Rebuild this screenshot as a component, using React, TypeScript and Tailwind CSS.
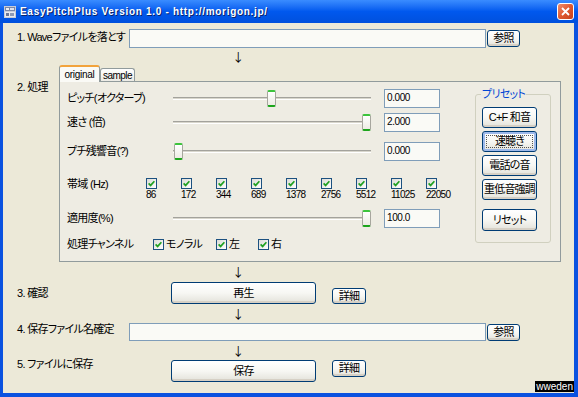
import React from 'react';

const BANDS = ['86', '172', '344', '689', '1378', '2756', '5512', '11025', '22050'];

const SLIDERS = [
  { label: 'ピッチ(オクターブ)', thumb: 94, value: '0.000', mt: 'mt-[7px]' },
  { label: '速さ (倍)', thumb: 189, value: '2.000', mt: 'mt-[5px]' },
  { label: 'プチ残響音(?)', thumb: 1, value: '0.000', mt: 'mt-[10px]' },
];

const PRESETS = ['C+F 和音', '速聴き', '電話の音', '重低音強調'];

function XpButton({ children, className = '', focused = false }: { children: React.ReactNode; className?: string; focused?: boolean }) {
  return (
    <button
      className={
        'relative flex items-center justify-center whitespace-nowrap rounded-[3px] border border-[#003C74] bg-gradient-to-b from-white via-[#F7F7F3] to-[#E3E2DA] text-[11px] leading-none tracking-[-0.8px] text-black ' +
        (focused ? 'shadow-[inset_0_0_0_2px_#9DB9EB] ' : 'shadow-[inset_0_-2px_0_#D6D0C5] ') +
        className
      }
    >
      {focused && <span className="absolute inset-[3px] border border-dotted border-[#555]" />}
      <span className="relative">{children}</span>
    </button>
  );
}

function TextBox({ value = '', className = '' }: { value?: string; className?: string }) {
  return (
    <div className={'border border-[#7F9DB9] bg-[#FAFAF6] pl-[2px] text-[10px] leading-[15px] tracking-[-0.4px] ' + className}>
      {value}
    </div>
  );
}

function Check() {
  return (
    <span className="flex h-[11px] w-[11px] shrink-0 items-center justify-center border border-[#1C5180] bg-gradient-to-br from-[#DCDCD7] to-white">
      <svg width="7" height="7" viewBox="0 0 7 7">
        <path d="M0.6 3.4 L2.6 5.4 L6.4 1.2" stroke="#21A121" strokeWidth="1.7" fill="none" />
      </svg>
    </span>
  );
}

function Slider({ thumb }: { thumb: number }) {
  return (
    <div className="relative flex h-[19px] w-[198px] items-center">
      <div className="h-[3px] w-full border-t border-b border-t-[#A3A29C] border-b-white bg-[#D8D6CC]" />
      <div
        className="absolute top-[1px] h-[17px] w-[9px] rounded-[2px] border-x border-x-[#A7A69E] border-t-2 border-b-2 border-t-[#3CC43C] border-b-[#1CA51C] bg-gradient-to-b from-white to-[#EDECE4]"
        style={{ left: thumb }}
      />
    </div>
  );
}

function Arrow({ h }: { h: string }) {
  return (
    <div className={'flex items-center pl-[215px] ' + h}>
      <span className="w-[12px] text-center font-['Noto_Sans_CJK_JP',sans-serif] text-[12px] leading-none">↓</span>
    </div>
  );
}

function TitleBar() {
  return (
    <div className="flex h-[23px] shrink-0 items-center bg-gradient-to-b from-[#3A8CFF] via-[#0058EE] to-[#0050DD] pl-[4px] pr-[4px]">
      <svg width="12" height="12" viewBox="0 0 12 12" className="mt-[1px]">
        <rect x="0" y="0" width="12" height="12" fill="#C8CCD8" />
        <rect x="1" y="1" width="10" height="4" fill="#7C88A8" />
        <rect x="1" y="6" width="10" height="5" fill="#E8EAF0" />
        <rect x="2" y="2" width="3" height="2" fill="#F0F0F0" />
        <rect x="6" y="2" width="4" height="2" fill="#DDE2EE" />
        <rect x="2" y="7" width="3" height="3" fill="#6A7697" />
        <rect x="6" y="7" width="4" height="3" fill="#8E99B5" />
      </svg>
      <span className="ml-[4px] text-[10px] font-bold tracking-[0.7px] text-white [text-shadow:1px_1px_0_#0A246A]">
        EasyPitchPlus Version 1.0 - http://morigon.jp/
      </span>
      <div className="ml-auto flex h-[17px] w-[17px] items-center justify-center rounded-[3px] border border-white bg-gradient-to-br from-[#EE8C6C] via-[#E0582F] to-[#C3421C]">
        <svg width="9" height="9" viewBox="0 0 9 9">
          <path d="M1 1 L8 8 M8 1 L1 8" stroke="white" strokeWidth="1.8" />
        </svg>
      </div>
    </div>
  );
}

export default function App() {
  return (
    <div className="relative flex h-[397px] w-[578px] flex-col overflow-hidden bg-[#0A52E0] font-['Liberation_Sans','Noto_Sans_CJK_JP',sans-serif] text-[11px] text-black [font-feature-settings:'palt']">
      <TitleBar />
      <div className="mb-[4px] ml-[3px] mr-[4px] flex flex-1 flex-col whitespace-nowrap bg-[#ECE9D8] pl-[14px] tracking-[-0.7px]">
        {/* 1 */}
        <div className="mt-[6px] flex h-[19px] items-start">
          <div className="w-[112px] leading-[16px]">1. Waveファイルを落とす</div>
          <TextBox className="h-[19px] w-[357px]" />
          <XpButton className="ml-[1px] mt-[1px] h-[17px] w-[33px]">参照</XpButton>
        </div>
        <Arrow h="h-[17px]" />

        {/* 2 */}
        <div className="flex h-[197px]">
          <div className="w-[42px] pt-[15px] leading-[14px]">2. 処理</div>
          <div className="flex w-[502px] flex-col">
            <div className="flex h-[16px] items-end">
              <div className="relative z-10 -mb-[1px] flex h-[17px] w-[41px] items-center justify-center rounded-t-[3px] border-x border-t-2 border-x-[#919B9C] border-t-[#F2A33B] bg-[#FAFAF6] text-[10px] tracking-[-0.3px]">
                original
              </div>
              <div className="flex h-[13px] w-[35px] items-center justify-center rounded-t-[3px] border-x border-t border-[#919B9C] bg-gradient-to-b from-white to-[#ECEBE5] text-[10px] tracking-[-0.5px]">
                sample
              </div>
            </div>
            <div className="flex h-[181px] border border-[#919B9C] bg-[#EEECE3]">
              <div className="flex w-[401px] shrink-0 flex-col pl-[7px]">
                {SLIDERS.map((s) => (
                  <div key={s.label} className={'flex h-[19px] items-center ' + s.mt}>
                    <div className="w-[106px]">{s.label}</div>
                    <Slider thumb={s.thumb} />
                    <TextBox value={s.value} className="ml-[13px] h-[19px] w-[56px]" />
                  </div>
                ))}
                <div className="mt-[17px] flex h-[22px] items-start">
                  <div className="w-[79px] leading-[12px]">帯域 (Hz)</div>
                  {BANDS.map((b) => (
                    <div key={b} className="flex w-[35px] flex-col items-start">
                      <Check />
                      <span className="text-[10px] leading-[11px] tracking-[-0.7px]">{b}</span>
                    </div>
                  ))}
                </div>
                <div className="mt-[9px] flex h-[19px] items-center">
                  <div className="w-[106px]">適用度(%)</div>
                  <Slider thumb={189} />
                  <TextBox value="100.0" className="ml-[13px] h-[19px] w-[56px]" />
                </div>
                <div className="mt-[9px] flex h-[14px] items-center">
                  <div className="w-[86px]">処理チャンネル</div>
                  <div className="flex w-[63px] items-center gap-[2px]">
                    <Check />
                    <span>モノラル</span>
                  </div>
                  <div className="flex w-[42px] items-center gap-[2px]">
                    <Check />
                    <span>左</span>
                  </div>
                  <div className="flex items-center gap-[2px]">
                    <Check />
                    <span>右</span>
                  </div>
                </div>
              </div>
              <div className="relative ml-[14px] mt-[12px] flex h-[149px] w-[76px] flex-col rounded-[3px] border border-[#D0D0BF] pl-[6px] pt-[12px]">
                <span className="absolute -top-[8px] left-[5px] bg-[#EEECE3] px-[1px] leading-[14px] text-[#0046D5]">プリセット</span>
                <div className="flex flex-col gap-[3px]">
                  {PRESETS.map((p) => (
                    <XpButton key={p} focused={p === '速聴き'} className="h-[21px] w-[55px]">
                      {p}
                    </XpButton>
                  ))}
                </div>
                <XpButton className="mt-[9px] h-[22px] w-[55px]">リセット</XpButton>
              </div>
            </div>
          </div>
        </div>

        <Arrow h="h-[20px]" />
        {/* 3 */}
        <div className="flex h-[22px]">
          <div className="w-[154px] self-center leading-[14px]">3. 確認</div>
          <XpButton className="h-[22px] w-[145px]">再生</XpButton>
          <XpButton className="ml-[16px] h-[16px] w-[34px] self-end">詳細</XpButton>
        </div>
        <Arrow h="h-[19px]" />
        {/* 4 */}
        <div className="flex h-[18px] items-start">
          <div className="-mt-[1px] w-[112px] leading-[14px]">4. 保存ファイル名確定</div>
          <TextBox className="h-[18px] w-[357px]" />
          <XpButton className="ml-[1px] mt-[1px] h-[17px] w-[33px]">参照</XpButton>
        </div>
        <Arrow h="h-[19px]" />
        {/* 5 */}
        <div className="flex h-[22px] items-start">
          <div className="-mt-[3px] w-[154px] leading-[14px]">5. ファイルに保存</div>
          <XpButton className="h-[22px] w-[145px]">保存</XpButton>
          <XpButton className="ml-[16px] h-[17px] w-[34px]">詳細</XpButton>
        </div>
      </div>
      <div className="absolute bottom-[5px] right-[4px] bg-black px-[1px] text-[10px] leading-[11px] text-white">wweden</div>
    </div>
  );
}
